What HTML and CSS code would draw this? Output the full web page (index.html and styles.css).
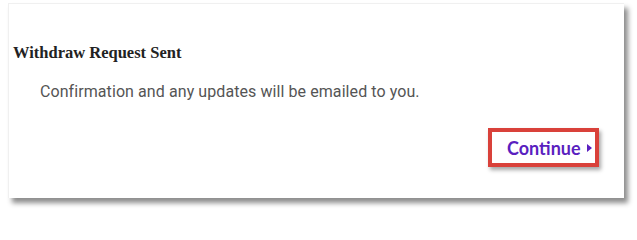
FILE: index.html
```html
<!DOCTYPE html>
<html>
<head>
<meta charset="utf-8">
<link rel="stylesheet" href="styles.css">
</head>
<body>
<div class="card">
  <h2 class="title">Withdraw Request Sent</h2>
  <p class="message">Confirmation and any updates will be emailed to you.</p>
  <div class="actions">
    <div class="highlight">
      <span class="continue">Continue</span>
      <svg class="caret" width="5" height="8" viewBox="0 0 5 8"><path d="M0 0 L5 4 L0 8 Z" fill="#5a1fc0"/></svg>
    </div>
  </div>
</div>
</body>
</html>
```

FILE: styles.css
```css
html, body {
  margin: 0;
  padding: 0;
  background: #ffffff;
}
body {
  box-sizing: border-box;
  min-height: 211px;
  padding: 3px 0 13px 8px;
}
.card {
  width: 616px;
  height: 195px;
  box-sizing: border-box;
  background: #ffffff;
  border-top: 1px solid #f0f0f0;
  border-left: 1px solid #f0f0f0;
  box-shadow: 4px 5px 5px rgba(0, 0, 0, 0.45);
  display: flex;
  flex-direction: column;
  padding: 0 25px 0 4px;
}
.title {
  margin: 40px 0 0 0;
  font-family: "Liberation Serif", serif;
  font-weight: bold;
  font-size: 16.5px;
  line-height: 18px;
  color: #222222;
}
.message {
  margin: 20px 0 0 27px;
  font-family: Roboto, sans-serif;
  font-size: 16px;
  letter-spacing: 0.08px;
  line-height: 20px;
  color: #555555;
}
.actions {
  display: flex;
  justify-content: flex-end;
  margin-top: 26px;
}
.highlight {
  box-sizing: border-box;
  width: 111px;
  height: 39px;
  border: 4px solid #d9413a;
  box-shadow: 2px 3px 4px rgba(0, 0, 0, 0.35);
  display: flex;
  align-items: center;
  padding-left: 15px;
  gap: 6px;
}
.continue {
  font-family: Lato, sans-serif;
  font-weight: bold;
  font-size: 18px;
  color: #5a1fc0;
}
.caret {
  display: block;
}
```
